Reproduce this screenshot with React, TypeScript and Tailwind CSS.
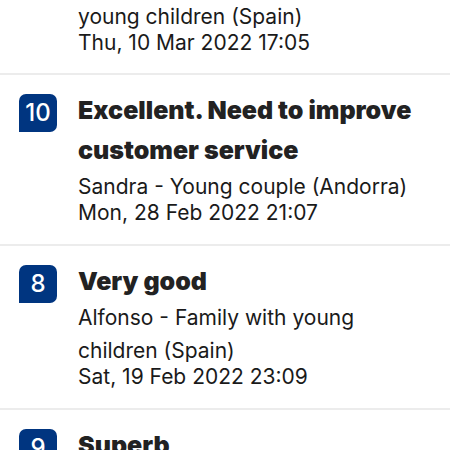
import React from 'react';

type Review = {
  score: number;
  title: string;
  reviewer: string;
  date: string;
};

const reviews: Review[] = [
  {
    score: 10,
    title: 'Excellent. Need to improve customer service',
    reviewer: 'Sandra - Young couple (Andorra)',
    date: 'Mon, 28 Feb 2022 21:07',
  },
  {
    score: 8,
    title: 'Very good',
    reviewer: 'Alfonso - Family with young children (Spain)',
    date: 'Sat, 19 Feb 2022 23:09',
  },
  {
    score: 9,
    title: 'Superb',
    reviewer: 'Marta - Group of friends (Spain)',
    date: 'Tue, 15 Feb 2022 10:42',
  },
];

const ScoreBadge: React.FC<{ score: number }> = ({ score }) => (
  <div className="mt-[4px] w-[38px] h-[38px] shrink-0 flex items-center justify-center rounded-[7px] rounded-bl-none bg-[#003580] text-white text-[24px] font-medium leading-none">
    {score}
  </div>
);

const ReviewRow: React.FC<{ review: Review }> = ({ review }) => (
  <div className="flex gap-[21px] pl-[19px] pr-[25px] pt-[15px] pb-[22px] border-b-2 border-[#ececec]">
    <ScoreBadge score={review.score} />
    <div className="flex flex-col min-w-0">
      <h3 className="text-[25px] leading-[40px] font-black text-[#222]">{review.title}</h3>
      <p className="text-[21px] leading-[33px] text-[#1a1a1a]">{review.reviewer}</p>
      <p className="text-[21px] leading-[19px] text-[#1a1a1a]">{review.date}</p>
    </div>
  </div>
);

export default function App() {
  return (
    <div className="w-[450px] h-[450px] overflow-hidden bg-white font-['Inter',sans-serif]">
      {/* tail of the previous review, scrolled past the top edge */}
      <div className="pl-[78px] pb-[21px] border-b-2 border-[#ececec]">
        <p className="text-[21px] leading-[33px] text-[#1a1a1a]">young children (Spain)</p>
        <p className="text-[21px] leading-[19px] text-[#1a1a1a]">Thu, 10 Mar 2022 17:05</p>
      </div>
      {reviews.map((r, i) => (
        <ReviewRow key={`review-${i}`} review={r} />
      ))}
    </div>
  );
}
